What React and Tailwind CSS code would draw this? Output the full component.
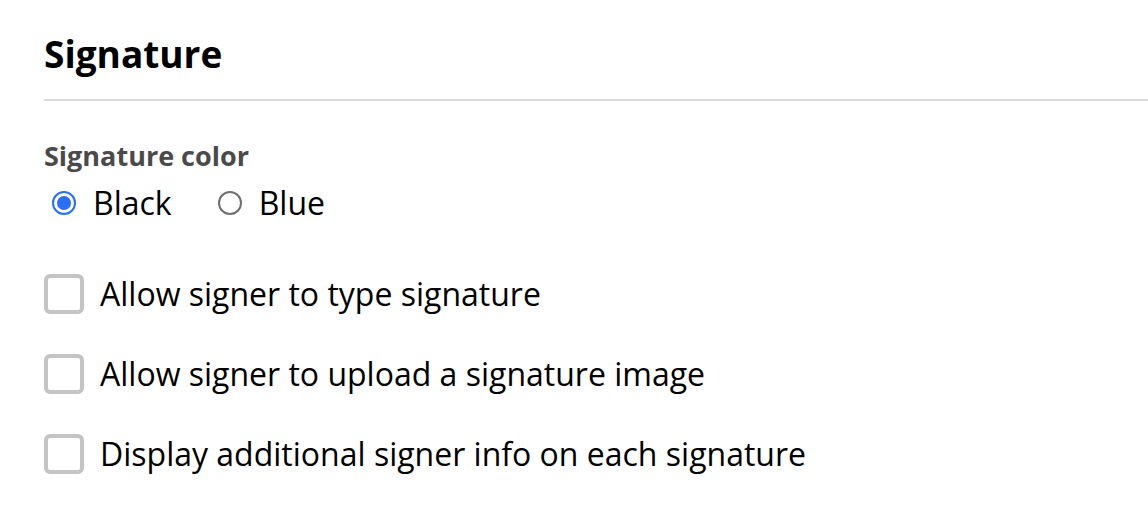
import React, { useState } from "react";

const OPTIONS = [
  "Allow signer to type signature",
  "Allow signer to upload a signature image",
  "Display additional signer info on each signature",
];

function Radio({ checked, label, onClick }) {
  return (
    <label className="flex items-center gap-[17px] cursor-pointer" onClick={onClick}>
      <span
        className={
          checked
            ? "w-[24px] h-[24px] rounded-full border-[2px] border-[#2b6ef6] flex items-center justify-center"
            : "w-[24px] h-[24px] rounded-full border-[2px] border-[#6e6e6e] flex items-center justify-center"
        }
      >
        {checked && <span className="w-[14px] h-[14px] rounded-full bg-[#2b6ef6]" />}
      </span>
      <span className="text-[32px] text-black leading-[40px]">{label}</span>
    </label>
  );
}

export default function App() {
  const [color, setColor] = useState("black");
  const [checks, setChecks] = useState([false, false, false]);

  return (
    <div className="w-[1148px] h-[516px] bg-white overflow-hidden pl-[44px] pt-[30px]" style={{ fontFamily: '"Open Sans", sans-serif' }}>
      <h1 className="text-[37px] font-bold text-black leading-[48px]">Signature</h1>
      <div className="mt-[21px] h-[2px] bg-[#dadada]" />

      <div className="mt-[38px] text-[27px] font-bold text-[#4a4a4a] leading-[34px]">Signature color</div>
      <div className="mt-[10px] flex items-center gap-[46px] pl-[8px]">
        <Radio checked={color === "black"} label="Black" onClick={() => setColor("black")} />
        <Radio checked={color === "blue"} label="Blue" onClick={() => setColor("blue")} />
      </div>

      <div className="mt-[51px] flex flex-col gap-[40px]">
        {OPTIONS.map((o, i) => (
          <label key={o} className="flex items-center gap-[16px] cursor-pointer">
            <span
              onClick={() => setChecks(checks.map((c, j) => (j === i ? !c : c)))}
              className="w-[40px] h-[40px] rounded-[6px] border-[4px] border-[#c4c4c4] bg-white"
            />
            <span className="text-[32px] text-black leading-[40px]">{o}</span>
          </label>
        ))}
      </div>
    </div>
  );
}
